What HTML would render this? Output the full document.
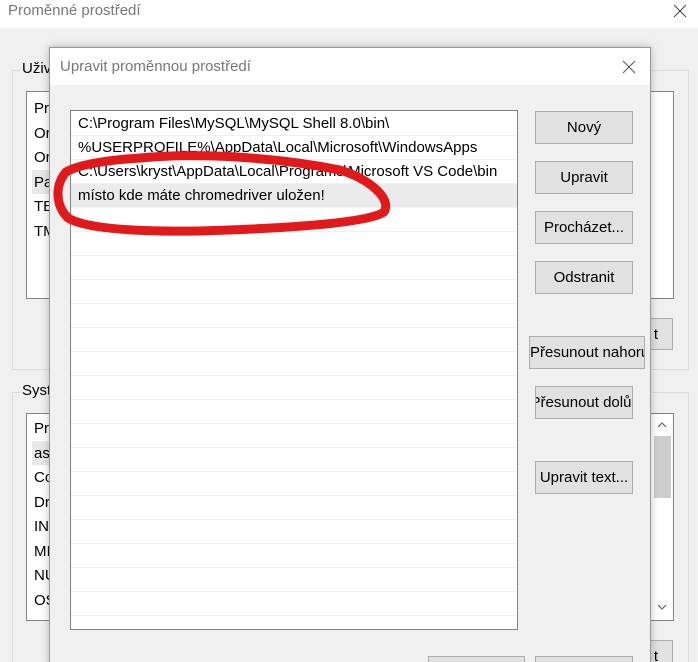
<!DOCTYPE html>
<html><head><meta charset="utf-8"><style>
*{margin:0;padding:0;box-sizing:border-box}
html,body{width:698px;height:662px;overflow:hidden}
body{background:#f0f0f0;font-family:"Liberation Sans",sans-serif;font-size:15px;color:#000;position:relative}
.a{position:absolute}
.btn{position:absolute;background:#e1e1e1;border:1px solid #adadad;text-align:center;line-height:31px;font-size:15px;white-space:nowrap;overflow:hidden}
.row{position:absolute;left:0;right:0;height:24px;border-bottom:1px solid #f0f0f0;padding-left:7px;line-height:23px;white-space:nowrap}
</style></head><body>
<div class="a" style="left:0;top:0;width:698px;height:28px;background:#fff"></div>
<div class="a" style="left:8px;top:2px;color:#777">Proměnné prostředí</div>
<svg class="a" style="left:672px;top:3px" width="16" height="16"><path d="M2 2L14 14M14 2L2 14" stroke="#444" stroke-width="1"/></svg>
<div class="a" style="left:12px;top:70px;width:677px;height:300px;border:1px solid #dcdcdc"></div>
<div class="a" style="left:20px;top:60px;background:#f0f0f0;padding:0 2px">Uživ</div>
<div class="a" style="left:26px;top:91px;width:648px;height:208px;background:#fff;border:1px solid #828282"></div>
<div class="a" style="left:32px;top:170px;width:20px;height:24px;background:#e8e8e8"></div>
<div class="a" style="left:34px;top:97px;line-height:24.5px">Pro<br>Or<br>Or<br>Pa<br>TE<br>TM</div>
<div class="btn" style="left:640px;top:318px;width:33px;height:32px;text-align:right;padding-right:14px">t</div>
<div class="a" style="left:12px;top:392px;width:677px;height:280px;border:1px solid #dcdcdc"></div>
<div class="a" style="left:20px;top:382px;background:#f0f0f0;padding:0 2px">Syste</div>
<div class="a" style="left:26px;top:413px;width:648px;height:208px;background:#fff;border:1px solid #828282"></div>
<div class="a" style="left:32px;top:441px;width:20px;height:24px;background:#e8e8e8"></div>
<div class="a" style="left:34px;top:417px;line-height:24.5px">Pro<br>asl<br>Co<br>Dr<br>IN<br>MI<br>NU<br>OS</div>
<div class="a" style="left:654px;top:436px;width:17px;height:62px;background:#cdcdcd"></div>
<svg class="a" style="left:656px;top:420px" width="12" height="10"><path d="M2 7L6 3L10 7" stroke="#555" fill="none"/></svg>
<svg class="a" style="left:656px;top:602px" width="12" height="10"><path d="M2 3L6 7L10 3" stroke="#555" fill="none"/></svg>
<div class="btn" style="left:640px;top:640px;width:33px;height:32px;text-align:right;padding-right:14px">t</div>

<div class="a" style="left:49px;top:47px;width:602px;height:620px;background:#f0f0f0;border:1px solid #9a9a9a;box-shadow:0 0 8px rgba(0,0,0,.25)"></div>
<div class="a" style="left:50px;top:48px;width:600px;height:37px;background:#fff"></div>
<div class="a" style="left:60px;top:58px;color:#777">Upravit proměnnou prostředí</div>
<svg class="a" style="left:621px;top:59px" width="16" height="16"><path d="M2 2L14 14M14 2L2 14" stroke="#555" stroke-width="1"/></svg>
<div class="a" style="left:70px;top:110px;width:448px;height:520px;background:#fff;border:1px solid #828282;overflow:hidden">
<div class="row" style="top:1px">C:\Program Files\MySQL\MySQL Shell 8.0\bin\</div>
<div class="row" style="top:25px">%USERPROFILE%\AppData\Local\Microsoft\WindowsApps</div>
<div class="row" style="top:49px">C:\Users\kryst\AppData\Local\Programs\Microsoft VS Code\bin</div>
<div class="row" style="top:73px;background:#ebebeb">místo kde máte chromedriver uložen!</div>
<div class="row" style="top:97px"></div><div class="row" style="top:121px"></div><div class="row" style="top:145px"></div><div class="row" style="top:169px"></div><div class="row" style="top:193px"></div><div class="row" style="top:217px"></div><div class="row" style="top:241px"></div><div class="row" style="top:265px"></div><div class="row" style="top:289px"></div><div class="row" style="top:313px"></div><div class="row" style="top:337px"></div><div class="row" style="top:361px"></div><div class="row" style="top:385px"></div><div class="row" style="top:409px"></div><div class="row" style="top:433px"></div><div class="row" style="top:457px"></div><div class="row" style="top:481px"></div>
</div>
<div class="btn" style="left:535px;top:111px;width:98px;height:33px">Nový</div>
<div class="btn" style="left:535px;top:161px;width:98px;height:33px">Upravit</div>
<div class="btn" style="left:535px;top:211px;width:98px;height:33px">Procházet...</div>
<div class="btn" style="left:535px;top:261px;width:98px;height:33px">Odstranit</div>
<div class="btn" style="left:529px;top:336px;width:116px;height:33px">Přesunout nahoru</div>
<div class="btn" style="left:535px;top:386px;width:98px;height:33px;text-indent:-6px">Přesunout dolů</div>
<div class="btn" style="left:535px;top:461px;width:98px;height:33px">Upravit text...</div>
<div class="btn" style="left:428px;top:656px;width:97px;height:33px"></div>
<div class="btn" style="left:535px;top:656px;width:98px;height:33px"></div>
<svg class="a" style="left:0;top:0" width="698" height="662"><path d="M140 158C200 152 280 158 340 170C372 180 392 200 384 212C370 222 300 228 200 231C130 232 85 228 68 218C55 205 55 185 66 172C80 164 110 160 140 158" fill="none" stroke="#e0191b" stroke-width="9" stroke-linecap="round"/></svg>
</body></html>
